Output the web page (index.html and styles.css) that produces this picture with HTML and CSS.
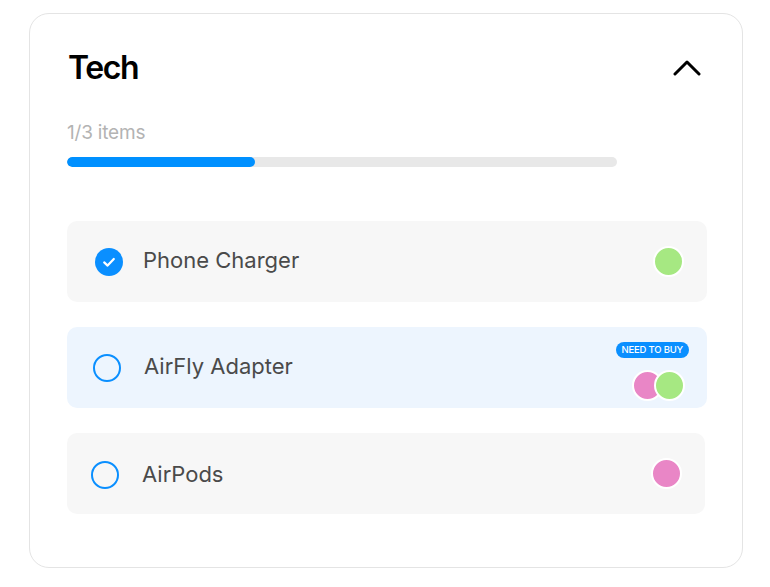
FILE: index.html
```html
<!DOCTYPE html>
<html lang="en">
<head>
<meta charset="utf-8">
<title>Tech</title>
<link rel="stylesheet" href="styles.css">
</head>
<body>
<section class="card">
  <header class="card-header">
    <h2 class="title">Tech</h2>
    <button class="toggle" aria-label="Collapse">
      <svg width="28" height="16" viewBox="0 0 28 16"><polyline points="2,14 14,2 26,14" fill="none" stroke="#000" stroke-width="3" stroke-linecap="round" stroke-linejoin="round"/></svg>
    </button>
  </header>
  <div class="count">1/3 items</div>
  <div class="progress"><div class="progress-fill" style="width: 34.2%"></div></div>
  <ul class="items">
    <li class="item item-1">
      <span class="check checked">
        <svg width="28" height="28" viewBox="0 0 28 28"><path d="M9.2 14.4 L12.6 17.6 L18.8 11" fill="none" stroke="#fff" stroke-width="2.2" stroke-linecap="round" stroke-linejoin="round"/></svg>
      </span>
      <span class="label">Phone Charger</span>
      <span class="people"><span class="dot green"></span></span>
    </li>
    <li class="item item-2 need">
      <span class="check"></span>
      <span class="label">AirFly Adapter</span>
      <span class="side">
        <span class="badge">NEED TO BUY</span>
        <span class="people"><span class="dot pink"></span><span class="dot green overlap"></span></span>
      </span>
    </li>
    <li class="item item-3">
      <span class="check"></span>
      <span class="label">AirPods</span>
      <span class="people"><span class="dot pink"></span></span>
    </li>
  </ul>
</section>
</body>
</html>
```

FILE: styles.css
```css
* { box-sizing: border-box; }
html, body { margin: 0; padding: 0; background: #fff; }
body {
  font-family: Inter, "Noto Sans", sans-serif;
  padding: 13px 0 0 29px;
}
.card {
  width: 714px;
  border: 1px solid #e4e4e4;
  border-radius: 20px;
  padding: 34px 35px 53px 37px;
  background: #fff;
}
.card-header {
  display: flex;
  align-items: center;
  justify-content: space-between;
  height: 40px;
}
.title {
  margin: 0 0 0 1px;
  font-size: 32px;
  line-height: 40px;
  font-weight: 600;
  color: #000;
  letter-spacing: -1.4px;
}
.toggle {
  border: 0;
  background: none;
  padding: 0;
  margin-right: 6px;
  width: 28px;
  height: 16px;
  display: flex;
}
.count {
  margin-top: 33px;
  font-size: 19px;
  line-height: 24px;
  color: #b3b3b3;
  letter-spacing: -0.2px;
}
.progress {
  margin-top: 12px;
  width: 550px;
  height: 10px;
  border-radius: 5px;
  background: #e8e8e8;
  overflow: hidden;
}
.progress-fill {
  height: 100%;
  border-radius: 5px;
  background: #0090ff;
}
.items {
  list-style: none;
  margin: 54px 0 0;
  padding: 0;
  display: flex;
  flex-direction: column;
  gap: 25px;
}
.item {
  height: 81px;
  border-radius: 10px;
  background: #f7f7f7;
  display: flex;
  align-items: center;
  padding: 0 23px 0 28px;
  gap: 20px;
}
.item-2 { padding-left: 26px; gap: 23px; }
.item-3 { padding-left: 24px; gap: 23px; width: 638px; }
.item-3 .check { margin-top: 3px; }
.item.need { background: #edf5fe; padding-right: 18px; }
.check {
  flex: none;
  width: 28px;
  height: 28px;
  border-radius: 50%;
  border: 2px solid #0a8fff;
  display: flex;
}
.check.checked {
  border: 0;
  background: #0a8fff;
}
.label {
  flex: 1;
  font-size: 22px;
  line-height: 28px;
  color: #4a4a4a;
  margin-bottom: 3px;
}
.item-3 .label { margin-bottom: 0; }
.people {
  display: flex;
  align-items: center;
}
.dot {
  width: 31px;
  height: 31px;
  border-radius: 50%;
  border: 2px solid #fff;
}
.dot.green { background: #a6e882; }
.dot.pink { background: #e986c6; }
.dot.overlap { margin-left: -9px; }
.side {
  align-self: stretch;
  display: flex;
  flex-direction: column;
  align-items: flex-end;
  padding: 15px 0 7px;
  gap: 12px;
}
.side .people { margin-right: 4px; }
.badge {
  height: 16px;
  padding: 0 6px;
  border-radius: 8px;
  background: #0a8fff;
  color: #fff;
  font-size: 9.5px;
  line-height: 16px;
  font-weight: 500;
  letter-spacing: -0.2px;
}
```
